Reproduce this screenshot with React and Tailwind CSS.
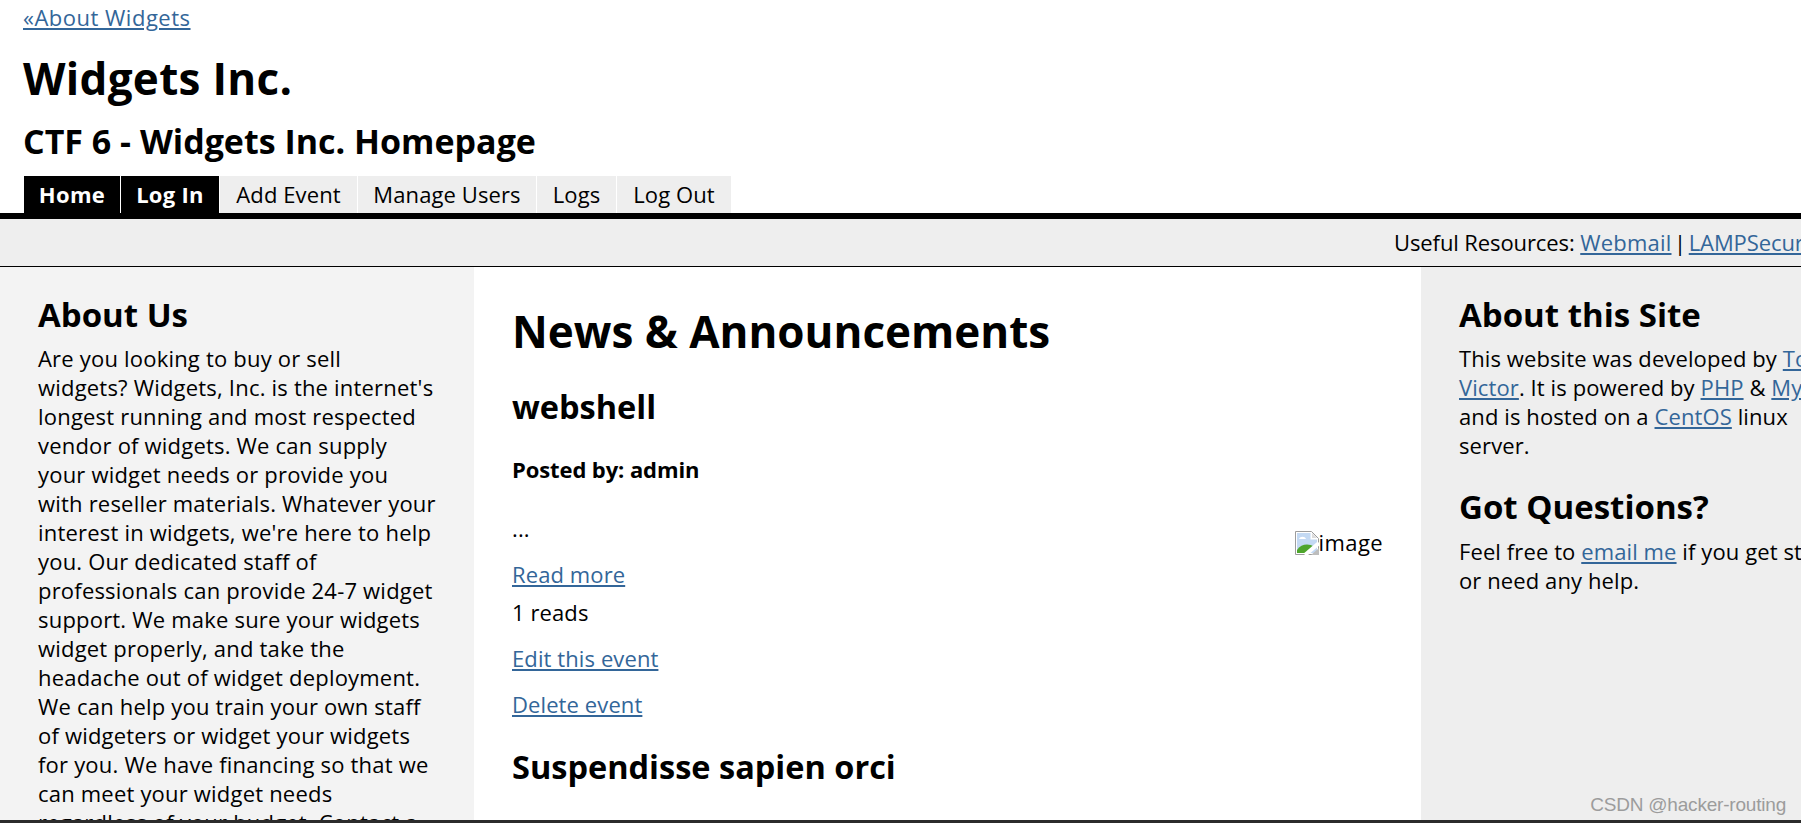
import React from "react";

const font = "font-['Open_Sans','Noto_Sans',sans-serif]";
const link = "text-[#336699] underline";

function NavItem({ label, active, width }) {
  return (
    <a
      className={`flex h-[37px] items-center justify-center whitespace-nowrap text-[22px] ${width} ${
        active ? "bg-black font-bold tracking-[0.3px] text-white" : "bg-[#eeeeee] tracking-[0.1px] text-black"
      }`}
    >
      {label}
    </a>
  );
}

function BrokenImage() {
  return (
    <svg width="24" height="24" viewBox="0 0 24 24" className="shrink-0">
      <path d="M0.5 0.5H16.5L23.5 7.5V23.5H0.5Z" fill="#fff" stroke="#9c9c9c" />
      <path d="M2 2H15.5V8.5H22V22H2Z" fill="#c3d9f3" />
      <path d="M4 8C5 5 10 5 11 8Z" fill="#fff" />
      <path d="M2 22V19C6 13 14 12 19 16L13 22Z" fill="#4ea52c" />
      <path d="M10 24L24 12" stroke="#fff" strokeWidth="4" />
      <path d="M16 24L24 17V24Z" fill="#bdbdbd" />
      <path d="M17 2L22 7H17Z" fill="#dcdcdc" />
    </svg>
  );
}

export default function App() {
  return (
    <div className={`relative h-[823px] w-full overflow-hidden bg-white text-black ${font}`}>
      <div className="w-[2000px]">
        {/* header */}
        <div className="pl-[23px]">
          <div className="h-[36px] text-[22px] leading-[34px] tracking-[0.5px]">
            <a className={link}>«About Widgets</a>
          </div>
          <h1 className="mt-[10px] h-[64px] text-[44px] leading-[64px] font-bold tracking-[0.3px]">Widgets Inc.</h1>
          <h2 className="mt-[7px] h-[48px] text-[34px] leading-[48px] font-bold">CTF 6 - Widgets Inc. Homepage</h2>
          <nav className="mt-[11px] flex gap-[1px] pl-[1px]">
            <NavItem label="Home" active width="w-[96px]" />
            <NavItem label="Log In" active width="w-[98px]" />
            <NavItem label="Add Event" width="w-[137px]" />
            <NavItem label="Manage Users" width="w-[178px]" />
            <NavItem label="Logs" width="w-[79px]" />
            <NavItem label="Log Out" width="w-[114px]" />
          </nav>
        </div>
        <div className="h-[6px] bg-black" />
        <div className="h-[48px] border-b border-black bg-[#eeeeee] pl-[1394px] text-[22px] leading-[46px] tracking-[-0.1px]">
          Useful Resources: <a className={`${link} tracking-[0.2px]`}>Webmail</a>{" "}
          <span className="mx-[-3px]">|</span> <a className={link}>LAMPSecurity</a>
        </div>

        {/* columns */}
        <div className="flex h-[600px]">
          <aside className="w-[474px] bg-[#f3f3f3] pt-[26px] pl-[38px] text-[22px] leading-[29px] tracking-[0.2px]">
            <h3 className="text-[33px] leading-[44px] font-bold tracking-normal">About Us</h3>
            <p className="mt-[7px] whitespace-nowrap">
              Are you looking to buy or sell<br />
              widgets? Widgets, Inc. is the internet's<br />
              longest running and most respected<br />
              vendor of widgets. We can supply<br />
              your widget needs or provide you<br />
              with reseller materials. Whatever your<br />
              interest in widgets, we're here to help<br />
              you. Our dedicated staff of<br />
              professionals can provide 24-7 widget<br />
              support. We make sure your widgets<br />
              widget properly, and take the<br />
              headache out of widget deployment.<br />
              We can help you train your own staff<br />
              of widgeters or widget your widgets<br />
              for you. We have financing so that we<br />
              can meet your widget needs<br />
              regardless of your budget. Contact a
            </p>
          </aside>

          <main className="w-[947px] px-[38px] pt-[33px] text-[22px] leading-[29px] tracking-[0.1px]">
            <h2 className="text-[44px] leading-[62px] font-bold tracking-normal">News &amp; Announcements</h2>
            <h3 className="mt-[23px] text-[32.5px] leading-[44px] font-bold tracking-normal">webshell</h3>
            <p className="mt-[26px] font-bold tracking-[-0.1px]">Posted by: admin</p>
            <div className="mt-[30px] flex items-start justify-between">
              <p>...</p>
              <div className="mt-[14px] flex items-center">
                <BrokenImage />
                <span className="tracking-[0.4px]">image</span>
              </div>
            </div>
            <p className="mt-[3px]"><a className={link}>Read more</a></p>
            <p className="mt-[9px]">1 reads</p>
            <p className="mt-[17px]"><a className={link}>Edit this event</a></p>
            <p className="mt-[17px]"><a className={link}>Delete event</a></p>
            <h3 className="mt-[26px] text-[32.5px] leading-[44px] font-bold tracking-normal">Suspendisse sapien orci</h3>
          </main>

          <aside className="flex-1 bg-[#eeeeee] pt-[26px] pl-[38px] text-[22px] leading-[29px] tracking-[0.1px]">
            <h3 className="text-[33px] leading-[44px] font-bold tracking-normal">About this Site</h3>
            <p className="mt-[7px] whitespace-nowrap">
              This website was developed by <a className={link}>Tom</a><br />
              <a className={link}>Victor</a>. It is powered by <a className={link}>PHP</a> &amp; <a className={link}>MySQL</a><br />
              and is hosted on a <a className={link}>CentOS</a> linux<br />
              server.
            </p>
            <h3 className="mt-[25px] text-[33px] leading-[44px] font-bold tracking-normal">Got Questions?</h3>
            <p className="mt-[8px] whitespace-nowrap">
              Feel free to <a className={link}>email me</a> if you get stuck<br />
              or need any help.
            </p>
          </aside>
        </div>
      </div>

      {/* watermark over the page */}
      <span className="absolute right-[15px] bottom-[4px] font-['Liberation_Sans',sans-serif] text-[19px] tracking-[-0.2px] text-[#9c9c9c]">
        CSDN @hacker-routing
      </span>
      <div className="absolute right-0 bottom-0 left-0 h-[3px] bg-[#2b2b2b]" />
    </div>
  );
}
